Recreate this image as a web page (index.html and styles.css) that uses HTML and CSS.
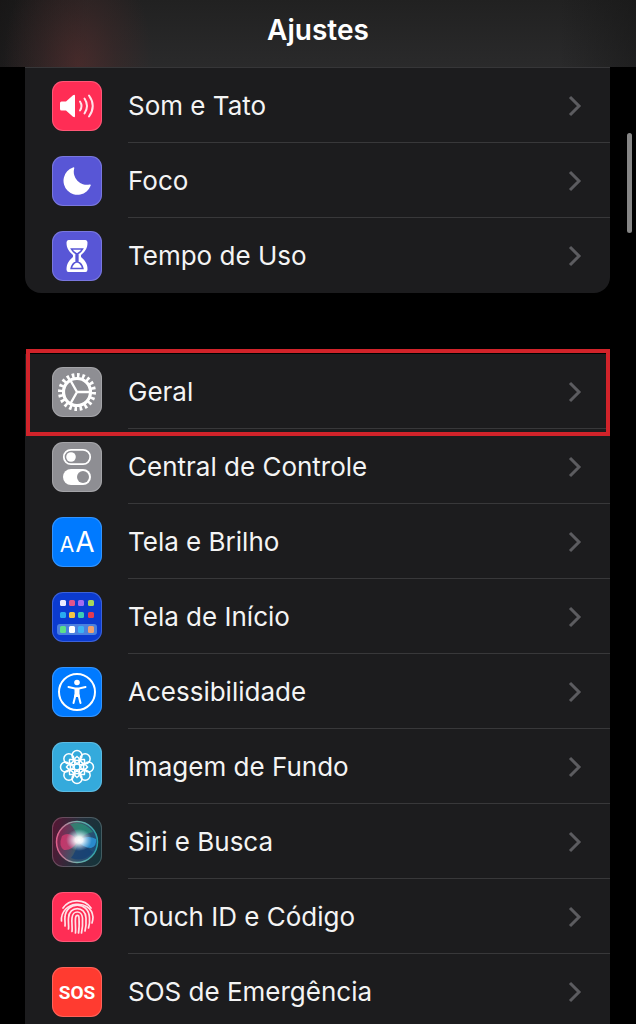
FILE: index.html
```html
<!DOCTYPE html>
<html lang="pt-BR">
<head>
    <meta charset="UTF-8">
    <meta name="viewport" content="width=device-width, initial-scale=1.0">
    <title>Ajustes</title>
    <link rel="stylesheet" href="styles.css">
</head>
<body>
    <svg class="defs" aria-hidden="true">
        <symbol id="chevron" viewBox="0 0 14 22">
            <path d="M2 2 L11 11 L2 20" fill="none" stroke="currentColor" stroke-width="3"/>
        </symbol>
    </svg>

    <header class="header">
        <h1>Ajustes</h1>
    </header>

    <main class="content">
        <ul class="group group-top">
            <li class="row">
                <a href="#som">
                    <svg class="icon pink" viewBox="0 0 50 50" aria-hidden="true">
                        <path d="M9.500 20.500h4.500l7-6.200q2-1.300 2 .8v19.800q0 2.100-2 .8l-7-6.200H9.500q-1.500 0-1.500-1.500v-6q0-1.500 1.500-1.500z" fill="#fff"/>
                        <path d="M28 20.500q3 4.500 0 9M32.500 17.500q5 7.500 0 15M37 14.500q7.500 10.500 0 21" fill="none" stroke="#ffe3e9" stroke-width="2" stroke-linecap="round"/>
                    </svg>
                    <span class="label">Som e Tato</span>
                    <svg class="chevron" aria-hidden="true"><use href="#chevron"/></svg>
                </a>
            </li>
            <li class="row">
                <a href="#foco">
                    <svg class="icon purple" viewBox="0 0 50 50" aria-hidden="true">
                        <path d="M21 11.500q1.600-.6 1.200 1A13 13 0 0 0 37.500 28.500q1.800-.4 1.100 1.200A14 14 0 1 1 21 11.500z" fill="#fff"/>
                    </svg>
                    <span class="label">Foco</span>
                    <svg class="chevron" aria-hidden="true"><use href="#chevron"/></svg>
                </a>
            </li>
            <li class="row">
                <a href="#tempo">
                    <svg class="icon purple" viewBox="0 0 50 50" aria-hidden="true">
                        <path d="M16.500 9h17q2 0 2 2.500C35.500 17 33.500 20 29.500 23.500q-1.200 1.500 0 3C33.500 30 35.500 33 35.500 38.500q0 2.500-2 2.500h-17q-2 0-2-2.500C14.500 33 16.500 30 20.500 26.500q1.200-1.500 0-3C16.500 20 14.500 17 14.500 11.500q0-2.500 2-2.500z" fill="#fff"/>
                        <path d="M19.500 18h11q-1 2.200-4.700 4.800V31q4 1.500 5 6.500H19.200q1-5 5-6.500v-8.200Q20.500 20.200 19.500 18z" fill="#fff" stroke="#5856d6" stroke-width="1.700"/>
                    </svg>
                    <span class="label">Tempo de Uso</span>
                    <svg class="chevron" aria-hidden="true"><use href="#chevron"/></svg>
                </a>
            </li>
        </ul>

        <ul class="group">
            <li class="row highlight">
                <a href="#geral">
                    <svg class="icon gray" viewBox="0 0 50 50" aria-hidden="true">
                        <g fill="none" stroke="#fff">
                            <circle cx="25" cy="25" r="16.500" stroke-width="5" pathLength="80" stroke-dasharray="2 2"/>
                            <circle cx="25" cy="25" r="13.500" stroke-width="3.200"/>
                            <path d="M25 25H38M25 25L18.500 13.500M25 25L18.500 36.500" stroke-width="2.400"/>
                        </g>
                    </svg>
                    <span class="label">Geral</span>
                    <svg class="chevron" aria-hidden="true"><use href="#chevron"/></svg>
                </a>
            </li>
            <li class="row">
                <a href="#central">
                    <svg class="icon gray" viewBox="0 0 50 50" aria-hidden="true">
                        <rect x="11.800" y="7.800" width="26.400" height="14.400" rx="7.200" fill="none" stroke="#fff" stroke-width="1.800"/>
                        <circle cx="19" cy="15" r="4.800" fill="#fff"/>
                        <rect x="11" y="27" width="28" height="16" rx="8" fill="#fff"/>
                        <circle cx="31" cy="35" r="6" fill="#8e8e93"/>
                    </svg>
                    <span class="label">Central de Controle</span>
                    <svg class="chevron" aria-hidden="true"><use href="#chevron"/></svg>
                </a>
            </li>
            <li class="row">
                <a href="#tela">
                    <svg class="icon blue" viewBox="0 0 50 50" aria-hidden="true">
                        <g class="letters">
                            <text x="15" y="35" font-size="21">A</text>
                            <text x="33" y="35" font-size="28">A</text>
                        </g>
                    </svg>
                    <span class="label">Tela e Brilho</span>
                    <svg class="chevron" aria-hidden="true"><use href="#chevron"/></svg>
                </a>
            </li>
            <li class="row">
                <a href="#inicio">
                    <svg class="icon navy" viewBox="0 0 50 50" aria-hidden="true">
                        <rect x="5" y="32" width="40" height="11" rx="3" fill="#4a80df"/>
                        <g>
                            <rect x="8" y="8" width="6" height="6" rx="1.500" fill="#e8ecff"/>
                            <rect x="17" y="8" width="6" height="6" rx="1.500" fill="#e0548c"/>
                            <rect x="26" y="8" width="6" height="6" rx="1.500" fill="#a36cf0"/>
                            <rect x="36" y="8" width="6" height="6" rx="1.500" fill="#a5d65a"/>
                            <rect x="8" y="20" width="6" height="6" rx="1.500" fill="#29a9f0"/>
                            <rect x="17" y="20" width="6" height="6" rx="1.500" fill="#f5c445"/>
                            <rect x="26" y="20" width="6" height="6" rx="1.500" fill="#3ccdb4"/>
                            <rect x="36" y="20" width="6" height="6" rx="1.500" fill="#e33b53"/>
                            <rect x="8" y="34" width="6" height="7" rx="1.500" fill="#5be08a"/>
                            <rect x="17" y="34" width="6" height="7" rx="1.500" fill="#ffffff"/>
                            <rect x="26" y="34" width="6" height="7" rx="1.500" fill="#3bb2f5"/>
                            <rect x="36" y="34" width="6" height="7" rx="1.500" fill="#f0a070"/>
                        </g>
                    </svg>
                    <span class="label">Tela de Início</span>
                    <svg class="chevron" aria-hidden="true"><use href="#chevron"/></svg>
                </a>
            </li>
            <li class="row">
                <a href="#acessibilidade">
                    <svg class="icon blue" viewBox="0 0 50 50" aria-hidden="true">
                        <circle cx="25" cy="25" r="18" fill="none" stroke="#fff" stroke-width="2"/>
                        <circle cx="25" cy="15.500" r="2.800" fill="#fff"/>
                        <path d="M16.500 20L23 21.500H27L33.500 20M21.500 36L23.500 28M28.500 36L26.500 28" fill="none" stroke="#fff" stroke-width="2" stroke-linecap="round"/>
                        <path d="M22.500 21h5v6l.5 3h-6l.5-3z" fill="#fff"/>
                    </svg>
                    <span class="label">Acessibilidade</span>
                    <svg class="chevron" aria-hidden="true"><use href="#chevron"/></svg>
                </a>
            </li>
            <li class="row">
                <a href="#fundo">
                    <svg class="icon cyan" viewBox="0 0 50 50" aria-hidden="true">
                        <defs>
                            <g id="petal">
                                <circle cx="25" cy="13.500" r="5"/>
                                <path d="M25 22C21.500 18.500 22 16.500 25 14.500C28 16.500 28.500 18.500 25 22"/>
                            </g>
                        </defs>
                        <g fill="none" stroke="#fff" stroke-width="1.500">
                            <circle cx="25" cy="25" r="3"/>
                            <use href="#petal"/>
                            <use href="#petal" transform="rotate(45 25 25)"/>
                            <use href="#petal" transform="rotate(90 25 25)"/>
                            <use href="#petal" transform="rotate(135 25 25)"/>
                            <use href="#petal" transform="rotate(180 25 25)"/>
                            <use href="#petal" transform="rotate(225 25 25)"/>
                            <use href="#petal" transform="rotate(270 25 25)"/>
                            <use href="#petal" transform="rotate(315 25 25)"/>
                        </g>
                    </svg>
                    <span class="label">Imagem de Fundo</span>
                    <svg class="chevron" aria-hidden="true"><use href="#chevron"/></svg>
                </a>
            </li>
            <li class="row">
                <a href="#siri">
                    <svg class="icon siri" viewBox="0 0 50 50" aria-hidden="true">
                        <defs>
                            <radialGradient id="glow">
                                <stop offset="0" stop-color="#fff"/>
                                <stop offset="0.300" stop-color="#fff" stop-opacity="0.900"/>
                                <stop offset="1" stop-color="#bfe6ff" stop-opacity="0"/>
                            </radialGradient>
                            <linearGradient id="orb" x1="0" y1="0.300" x2="1" y2="0.600">
                                <stop offset="0" stop-color="#b8205a"/>
                                <stop offset="0.500" stop-color="#4d6f86"/>
                                <stop offset="1" stop-color="#1b5fa5"/>
                            </linearGradient>
                            <linearGradient id="ring" x1="0" y1="0.500" x2="1" y2="0.500">
                                <stop offset="0" stop-color="#e0608c"/>
                                <stop offset="0.500" stop-color="#76b3ac"/>
                                <stop offset="1" stop-color="#2a9fa8"/>
                            </linearGradient>
                        </defs>
                        <circle cx="25" cy="25" r="20.500" fill="url(#orb)" fill-opacity="0.600" stroke="url(#ring)" stroke-width="1.500"/>
                        <path d="M18 7Q32 3 41 15Q33 16 27 23Q24 13 18 7z" fill="#22a27c" opacity="0.600"/>
                        <path d="M26 25Q34 29 41 35Q32 46 19 41Q24 35 26 25z" fill="#123d75" opacity="0.700"/>
                        <path d="M26 24Q18 13 10 19Q6 29 12 33Q20 34 26 24z" fill="#ed3c77" opacity="0.650"/>
                        <path d="M26 24Q35 17 44 22Q45 29 39 31Q31 31 26 24z" fill="#2c9de8" opacity="0.750"/>
                        <ellipse cx="27" cy="23" rx="13" ry="11" fill="url(#glow)"/>
                    </svg>
                    <span class="label">Siri e Busca</span>
                    <svg class="chevron" aria-hidden="true"><use href="#chevron"/></svg>
                </a>
            </li>
            <li class="row">
                <a href="#touchid">
                    <svg class="icon pink" viewBox="0 0 50 50" aria-hidden="true">
                        <g fill="none" stroke="#ffe3e9" stroke-width="1.700" stroke-linecap="round">
                            <path d="M11 16C17 7 32 6 39 16"/>
                            <path d="M9.500 29C8 9 39 6 41 25Q41 28 40 31"/>
                            <path d="M13 34C13.500 31 12.500 28 13 25C14 9 37 9 37.500 26Q38 31 36.500 36"/>
                            <path d="M16.500 37C17 33 16 30 16.500 26C17 13.500 33.500 13.500 34 26Q34.500 33 33 39"/>
                            <path d="M20 39.500C20.500 35 19.500 30 20 26C20.500 18 30 18 30.500 26Q31 34 29.500 41"/>
                            <path d="M23.500 41C24 36 23 30 23.500 26C24 22.500 27 22.500 27 26Q27.500 35 26.500 41"/>
                        </g>
                    </svg>
                    <span class="label">Touch ID e Código</span>
                    <svg class="chevron" aria-hidden="true"><use href="#chevron"/></svg>
                </a>
            </li>
            <li class="row">
                <a href="#sos">
                    <svg class="icon red" viewBox="0 0 50 50" aria-hidden="true">
                        <text class="sos" x="25" y="32" font-size="19">SOS</text>
                    </svg>
                    <span class="label">SOS de Emergência</span>
                    <svg class="chevron" aria-hidden="true"><use href="#chevron"/></svg>
                </a>
            </li>
        </ul>
    </main>
    <div class="scroll-thumb"></div>
</body>
</html>
```
FILE: styles.css
```css
* {
    box-sizing: border-box;
}
body {
    margin: 0;
    height: 100vh;
    display: flex;
    flex-direction: column;
    background-color: #000;
    color: #f4f4f4;
    font-family: Inter, "Liberation Sans", sans-serif;
}
.defs {
    display: none;
}
.header {
    flex: none;
    display: flex;
    justify-content: center;
    padding: 14px 0 21px;
    background:
        radial-gradient(ellipse 75px 120px at 78px 65px, rgba(90, 44, 44, 0.6), rgba(70, 40, 40, 0.4) 50%, transparent),
        linear-gradient(to right, rgba(18, 16, 16, 0.6), transparent 14%, transparent 88%, rgba(20, 20, 20, 0.5)),
        linear-gradient(#212121, #2a2a2b);
}
h1 {
    margin: 0;
    font-size: 28px;
    line-height: 32px;
    font-weight: 600;
    color: #fff;
}
.content {
    flex: 1;
    min-height: 0;
    overflow-y: auto;
    scrollbar-width: none;
    padding: 0 26px 0 25px;
}
.group {
    list-style: none;
    margin: 0 0 61px;
    padding: 0;
    background-color: #1c1c1e;
}
.group-top {
    border-top: 1px solid #363638;
    border-radius: 0 0 16px 16px;
}
.row {
    position: relative;
}
.row a {
    display: flex;
    align-items: center;
    gap: 26px;
    height: 75px;
    padding: 0 28px 0 27px;
    color: inherit;
    text-decoration: none;
}
/* separator starts under the label, not under the icon */
.row:not(:last-child)::before {
    content: "";
    position: absolute;
    left: 103px;
    right: 0;
    bottom: 0;
    height: 1px;
    background-color: #38383a;
}
.highlight::after {
    content: "";
    position: absolute;
    z-index: 1;
    inset: -5px 0 -7px 1px;
    border: 4px solid #d1232a;
    pointer-events: none;
}
.label {
    flex: 1;
    font-size: 26px;
    line-height: 32px;
}
.chevron {
    flex: none;
    width: 14px;
    height: 22px;
    color: #5c5c60;
}
.icon {
    flex: none;
    width: 50px;
    height: 50px;
    border-radius: 11px;
    box-shadow: inset 0 0 0 1px rgba(255, 255, 255, 0.2);
}
.pink {
    background-color: #ff2d55;
}
.purple {
    background-color: #5856d6;
}
.gray {
    background-color: #8e8e93;
}
.blue {
    background-color: #007aff;
}
.navy {
    background-color: #0b3bd0;
}
.cyan {
    background-color: #34aadc;
}
.red {
    background-color: #ff3b30;
}
.siri {
    background: linear-gradient(100deg, #5a1433, #26303c 50%, #12343a);
}
.letters {
    fill: #fff;
    text-anchor: middle;
}
.sos {
    fill: #fff;
    font-family: "Liberation Sans Narrow", Roboto, sans-serif;
    font-weight: 700;
    text-anchor: middle;
}
.scroll-thumb {
    position: fixed;
    top: 133px;
    right: 4px;
    width: 5px;
    height: 100px;
    border-radius: 3px;
    background-color: #868686;
}
```
